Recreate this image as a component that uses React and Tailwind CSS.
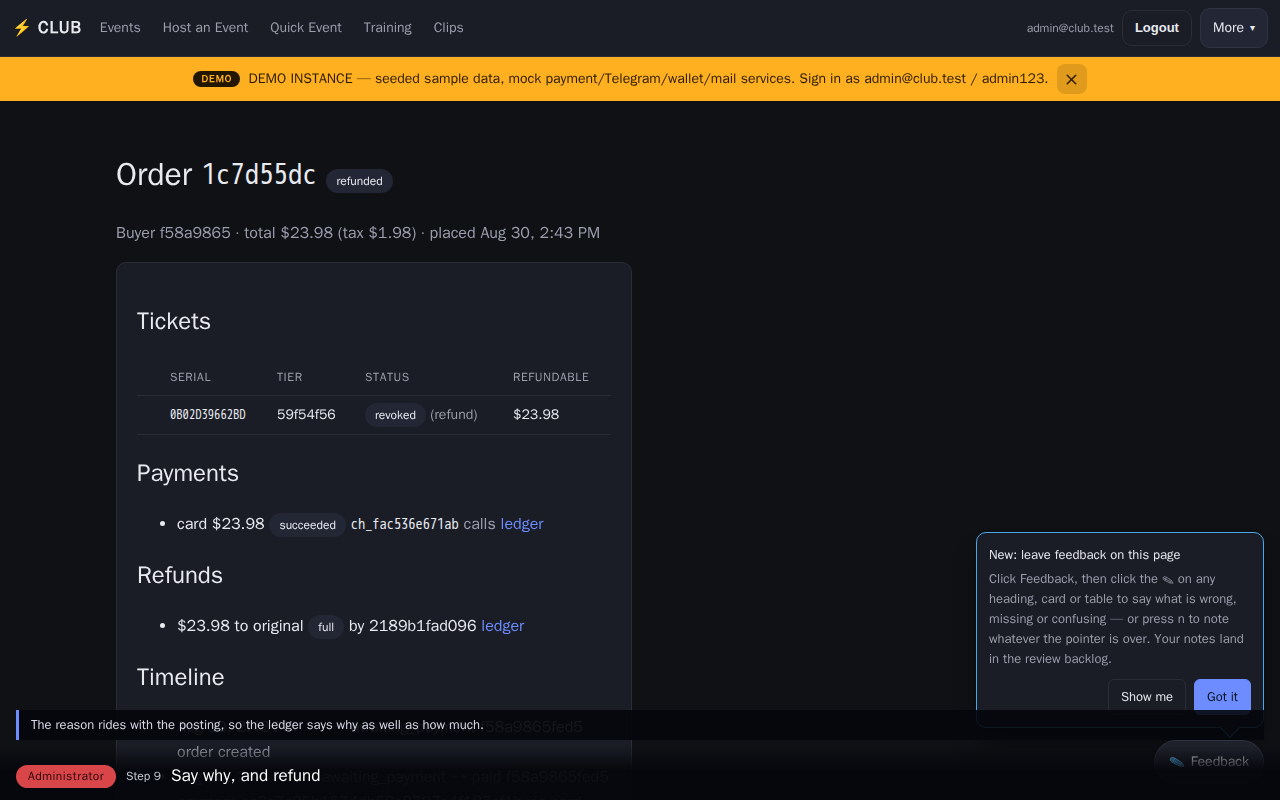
import { X } from 'lucide-react';

const NAV_LINKS = ['Events', 'Host an Event', 'Quick Event', 'Training', 'Clips'];

const TICKETS = [
  { serial: '0B02D39662BD', tier: '59f54f56', status: 'revoked', note: '(refund)', refundable: '$23.98' },
];

const TIMELINE = [
  { at: 'Aug 30, 2:43 PM', move: '· → awaiting_payment', actor: 'f58a9865fed5', note: 'order created' },
  { at: 'Aug 30, 2:43 PM', move: 'awaiting_payment → paid', actor: 'f58a9865fed5', note: 'payment ca3c7c95b1574db58c8797c4f187cf1b via card' },
];

function Code({ children }) {
  return <code className="font-['WenQuanYi_Zen_Hei_Mono','Noto_Sans_Mono_CJK_JP','Liberation_Mono',monospace] text-[0.9em] leading-none">{children}</code>;
}

function Badge({ children }) {
  return (
    <span className="rounded-full bg-[#232634] px-[10px] py-1 text-xs leading-none text-[#e8eaf0]">
      {children}
    </span>
  );
}

function Heading({ children }) {
  return <h2 className="my-5 text-2xl leading-9">{children}</h2>;
}

function Header() {
  return (
    <header className="flex h-[57px] items-center justify-between border-b border-[#2a2d36] bg-[#1b1d26] px-3">
      <div className="flex items-center gap-[18px]">
        <a href="#" className="flex items-center gap-1.5 text-[17px] font-extrabold tracking-wider">
          <span className="text-base tracking-normal">⚡</span> CLUB
        </a>
        <nav className="flex gap-[22px] text-sm text-[#9a9ead]">
          {NAV_LINKS.map((l) => <a key={l} href="#">{l}</a>)}
        </nav>
      </div>
      <div className="flex items-center gap-2">
        <span className="text-xs text-[#9a9ead]">admin@club.test</span>
        <button className="h-9 rounded-[10px] border border-[#2a2d36] px-3 font-['Liberation_Sans',Arial,sans-serif] text-[13px] font-bold">Logout</button>
        <button className="flex h-10 items-center gap-1.5 rounded-[10px] border border-[#2f3240] bg-[#232634] px-3 text-sm">
          More <span className="text-[10px]">▾</span>
        </button>
      </div>
    </header>
  );
}

function DemoBanner() {
  return (
    <div className="flex h-11 items-center justify-center gap-2 bg-[#ffb020] text-sm text-[#2b1a00]">
      <span className="rounded-full bg-[#231700] px-2 text-[10px] leading-4 font-extrabold tracking-widest text-[#ffb020]">DEMO</span>
      <span>DEMO INSTANCE — seeded sample data, mock payment/Telegram/wallet/mail services. Sign in as admin@club.test / admin123.</span>
      <button aria-label="Dismiss" className="flex size-[30px] items-center justify-center rounded-lg bg-black/12">
        <X size={17} strokeWidth={2} />
      </button>
    </div>
  );
}

function Pencil({ className, fill = 'none' }) {
  return (
    <svg viewBox="0 0 16 11" className={className} fill={fill} stroke="currentColor" strokeWidth="1" strokeLinejoin="round">
      <path d="M3.5 1 Q1 1 1.2 3.2 Q1.6 5.2 3.6 6 L10.5 9.6 L15 9.8 L12.6 6 L6 1.8 Z" />
      <path d="M2.6 3.2 L11 7.6 M5.8 1.8 L3.8 5.8 M12.6 6 L10.5 9.6" />
    </svg>
  );
}

function CoachMark() {
  return (
    <div className="fixed right-4 bottom-[72px] w-72 rounded-[10px] border border-[#4aa8e8] bg-[#1b1d26] p-3 text-[13px] shadow-xl shadow-black/50">
      <p className="leading-5">New: leave feedback on this page</p>
      <p className="mt-1 leading-5 text-[#9a9ead]">
        Click Feedback, then click the <Pencil className="inline h-2 w-3" /> on any heading, card or table to say what is wrong, missing or confusing — or press n to note whatever the pointer is over. Your notes land in the review backlog.
      </p>
      <div className="mt-2.5 flex justify-end gap-2">
        <button className="h-9 rounded-md border border-[#2a2d36] px-3">Show me</button>
        <button className="h-9 rounded-md border border-[#6c8cff] bg-[#6c8cff] px-3 text-[#0c1020]">Got it</button>
      </div>
      <span className="absolute right-[26px] -bottom-2 size-3.5 rotate-45 border-r border-b border-[#4aa8e8] bg-[#1b1d26]" />
    </div>
  );
}

export default function App() {
  return (
    <div className="h-screen overflow-hidden bg-[#101115] font-['WenQuanYi_Zen_Hei','Noto_Sans_CJK_JP',sans-serif] text-[#e8eaf0]">
      <Header />
      <DemoBanner />
      <main className="mx-auto max-w-[1080px] px-4 pt-12">
        <h1 className="mb-5 text-[32px] leading-[51px]">
          Order <Code>1c7d55dc</Code> <Badge>refunded</Badge>
        </h1>
        <p className="mb-4 text-base leading-[26px] text-[#9a9ead]">
          Buyer f58a9865 · total $23.98 (tax $1.98) · placed Aug 30, 2:43 PM
        </p>
        <div className="grid grid-cols-2 gap-4">
          <section className="flow-root rounded-[10px] border border-[#2a2d36] bg-[#1b1d26] p-5">
            <Heading>Tickets</Heading>
            <table className="w-full table-fixed text-left text-sm">
              <thead className="text-xs tracking-wider text-[#9a9ead] uppercase">
                <tr className="h-9 border-b border-[#2a2d36]">
                  <th className="w-[33px]" />
                  <th className="w-[107px] font-normal">Serial</th>
                  <th className="w-[88px] font-normal">Tier</th>
                  <th className="w-[148px] font-normal">Status</th>
                  <th className="font-normal">Refundable</th>
                </tr>
              </thead>
              <tbody>
                {TICKETS.map((t) => (
                  <tr key={t.serial} className="h-[39px] border-b border-[#2a2d36]">
                    <td />
                    <td><Code>{t.serial}</Code></td>
                    <td>{t.tier}</td>
                    <td><Badge>{t.status}</Badge> <span className="text-[#9a9ead]">{t.note}</span></td>
                    <td>{t.refundable}</td>
                  </tr>
                ))}
              </tbody>
            </table>

            <Heading>Payments</Heading>
            <ul className="list-disc pl-10 leading-[26px]">
              <li>
                card $23.98 <Badge>succeeded</Badge> <Code>ch_fac536e671ab</Code>{' '}
                <span className="text-[#9a9ead]">calls</span> <a href="#" className="text-[#6c8cff]">ledger</a>
              </li>
            </ul>

            <Heading>Refunds</Heading>
            <ul className="list-disc pl-10 leading-[26px]">
              <li>
                $23.98 to original <Badge>full</Badge> by 2189b1fad096 <a href="#" className="text-[#6c8cff]">ledger</a>
              </li>
            </ul>

            <Heading>Timeline</Heading>
            <ul className="list-disc pl-10 leading-[25px] text-[#9a9ead]">
              {TIMELINE.map((e) => (
                <li key={e.move}>
                  <span className="mr-5">{e.at}</span> {e.move} {e.actor} {e.note}
                </li>
              ))}
            </ul>
          </section>
        </div>
      </main>

      <CoachMark />
      <button className="fixed right-4 bottom-4 flex h-11 items-center gap-1.5 rounded-full border border-[#2f3240] bg-[#1f212b] px-3.5 text-sm">
        <Pencil className="h-3 w-4 text-[#7cc4ee]" fill="#2f8fd0" /> Feedback
      </button>

      {/* tour caption, sits above everything */}
      <div className="fixed inset-x-0 bottom-0">
        <p className="mx-4 border-l-[3px] border-[#6c8cff] bg-[#05070c]/90 px-3 text-[13px] leading-[30px] text-[#d8dce6]">
          The reason rides with the posting, so the ledger says why as well as how much.
        </p>
        <div className="flex h-[60px] items-end gap-[10px] bg-linear-to-b from-transparent from-10% to-[#05070c]/95 to-50% px-4 pb-3">
          <span className="rounded-full bg-[#d9464a] px-3 text-xs leading-[23px] tracking-[0.04em] text-[#2a0608]">Administrator</span>
          <span className="text-xs leading-[23px] text-[#c8ccd6]">Step 9</span>
          <span className="text-[17px] leading-[25px] text-white">Say why, and refund</span>
        </div>
      </div>
    </div>
  );
}
